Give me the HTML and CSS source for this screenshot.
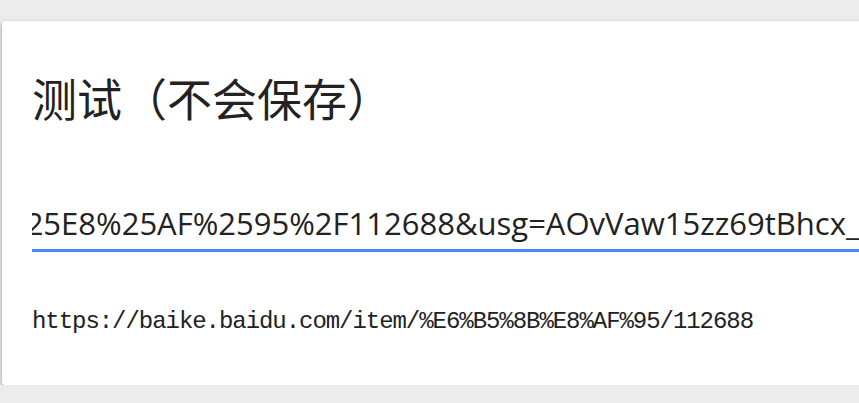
FILE: index.html
```html
<!DOCTYPE html>
<html lang="zh-CN">

<head>
    <meta charset="UTF-8">
    <meta name="viewport" content="width=device-width, initial-scale=1.0">
    <title>测试</title>
    <link rel="stylesheet" href="styles.css">
</head>

<body>
    <div class="card">
        <h1 class="title">测试（不会保存）</h1>

        <!-- long link field, scrolled to the end -->
        <div class="field">
            <div class="field-text">%25E8%25AF%2595%2F112688&amp;usg=AOvVaw15zz69tBhcx_3k</div>
        </div>

        <div class="result">https://baike.baidu.com/item/%E6%B5%8B%E8%AF%95/112688</div>
    </div>
</body>

</html>
```

FILE: styles.css
```css
html {
    overflow: hidden;
}

body {
    margin: 0;
    padding: 0;
    background-color: #ececec;
    font-family: 'Noto Sans', 'Noto Sans CJK SC', sans-serif;
    color: #222;
}

.card {
    width: 920px;
    height: 364px;
    margin: 21px 0 0 2px;
    padding: 0 30px;
    box-sizing: border-box;
    background-color: white;
    border-radius: 3px;
    box-shadow: 0 2px 4px rgba(0, 0, 0, 0.4);
}

.title {
    margin: 0;
    padding-top: 49px;
    font-family: 'Noto Sans CJK SC', sans-serif;
    font-size: 45px;
    font-weight: normal;
    line-height: 55px;
}

.field {
    width: 830px;
    margin-top: 75px;
    padding-bottom: 2px;
    border-bottom: 3px solid #4488f4;
    overflow: hidden;
}

.field-text {
    white-space: nowrap;
    font-family: 'Open Sans', sans-serif;
    font-size: 31px;
    line-height: 47px;
    text-indent: -32px;
}

.result {
    margin-top: 56px;
    font-family: 'Liberation Mono', monospace;
    font-size: 24px;
    letter-spacing: -1.05px;
    color: #222;
}
```
